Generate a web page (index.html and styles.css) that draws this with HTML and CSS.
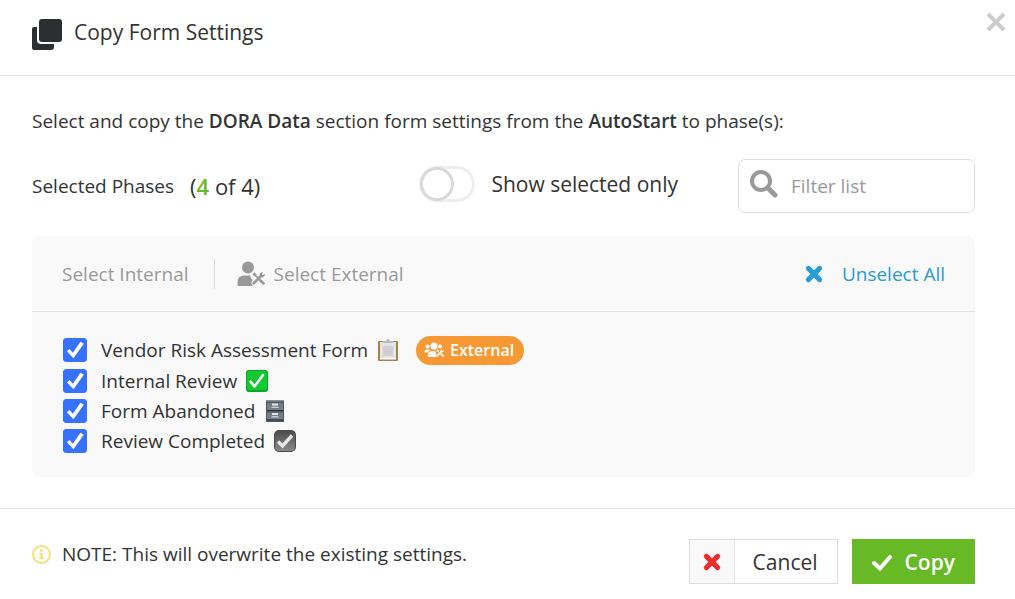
FILE: index.html
```html
<!DOCTYPE html>
<html lang="en">
<head>
    <meta charset="UTF-8">
    <meta name="viewport" content="width=device-width, initial-scale=1.0">
    <title>Copy Form Settings</title>
    <link rel="stylesheet" href="styles.css">
</head>
<body>
    <!-- shared icons -->
    <svg class="sprite" aria-hidden="true">
        <symbol id="icon-times" viewBox="0 0 16 16">
            <path d="M3.500 3.500l9 9M12.500 3.500l-9 9" fill="none" stroke="currentColor" stroke-width="4" stroke-linecap="round" />
        </symbol>
        <symbol id="icon-tools" viewBox="0 0 12 12">
            <path d="M3.500 3.500l5 5" stroke="currentColor" stroke-width="1.500" />
            <path d="M1.200 1.300l2.400 2.200" stroke="currentColor" stroke-width="2.600" />
            <path d="M8 8l2.500 2.500M1.600 10.400L8.500 3.500" stroke="currentColor" stroke-width="2.600" stroke-linecap="round" />
            <path d="M7 3.400A2.600 2.600 0 0 1 10.300.4L8.900 1.900l.2 1 1 .2L11.600 1.700A2.600 2.600 0 0 1 8.600 5z" fill="currentColor" />
        </symbol>
    </svg>

    <form class="modal">
        <header class="modal-header">
            <svg class="icon-copy" width="30" height="31" viewBox="0 0 30 31" aria-hidden="true">
                <rect x="7" y="0" width="23" height="23" rx="3" fill="#2d2e2f" />
                <path d="M5 8H2a2 2 0 0 0-2 2v19a2 2 0 0 0 2 2h17a3 3 0 0 0 3-3v-3H9a4 4 0 0 1-4-4z" fill="#2d2e2f" />
            </svg>
            <h1>Copy Form Settings</h1>
            <button type="button" class="close" aria-label="Close">
                <svg width="20" height="20" viewBox="0 0 20 20"><path d="M2 2l16 16M18 2L2 18" stroke="currentColor" stroke-width="4" /></svg>
            </button>
        </header>

        <main class="modal-body">
            <p class="intro">Select and copy the <strong>DORA Data</strong> section form settings from the <strong>AutoStart</strong> to phase(s):</p>

            <div class="toolbar">
                <div class="selected">Selected Phases <span class="count">(<b>4</b> of 4)</span></div>
                <label class="switch"><input type="checkbox" id="selectedOnly"> Show selected only</label>
                <div class="filter">
                    <svg width="28" height="28" viewBox="0 0 28 28" aria-hidden="true">
                        <circle cx="11" cy="11" r="9" fill="none" stroke="#999" stroke-width="4" />
                        <path d="M18 18l7 7" stroke="#999" stroke-width="5" stroke-linecap="round" />
                    </svg>
                    <input type="text" id="filter" placeholder="Filter list" aria-label="Filter list">
                </div>
            </div>

            <section class="panel">
                <div class="panel-actions">
                    <button type="button">Select Internal</button>
                    <span class="divider"></span>
                    <button type="button">
                        <svg width="28" height="26" viewBox="0 0 28 26" aria-hidden="true">
                            <circle cx="11" cy="6.500" r="6" fill="currentColor" />
                            <path d="M7 14.500h6.500c0 2 .5 3 2.200 4.500-1.700 2-1.700 4 .3 6H2q-1.500 0-1.500-1.500v-2q0-7 6.500-7z" fill="currentColor" />
                            <use href="#icon-tools" x="15" y="11" width="13" height="13" />
                        </svg>
                        Select External
                    </button>
                    <button type="button" class="unselect">
                        <svg width="20" height="20" aria-hidden="true"><use href="#icon-times" /></svg>
                        Unselect All
                    </button>
                </div>

                <ul class="phases">
                    <li>
                        <input type="checkbox" id="phase1" checked>
                        <label for="phase1">Vendor Risk Assessment Form
                            <svg width="22" height="24" viewBox="0 0 22 24" role="img" aria-label="Clipboard">
                                <rect x="1" y="3" width="20" height="20" rx="1" fill="#a8824c" />
                                <rect x="3" y="4" width="16" height="17" fill="#e4e4e4" />
                                <path d="M6 8h10v10H6z" fill="#cfcfd0" />
                                <path d="M3 20h16v1.500H3z" fill="#fff" />
                                <path d="M6 5V3h3a2 2 0 0 1 4 0h3v2z" fill="#b9c0c4" />
                            </svg>
                        </label>
                        <span class="badge">
                            <svg width="20" height="16" viewBox="0 0 20 16" aria-hidden="true">
                                <circle cx="3.500" cy="4.500" r="2" fill="#fff" />
                                <circle cx="10" cy="4" r="3.500" fill="#fff" />
                                <circle cx="16" cy="4.500" r="2" fill="#fff" />
                                <path d="M.5 10.500V9.500q0-2 2-2h2q1 0 1.500.5-1.500 1-2 2.500zM4.500 15q-.8 0-.8-1 0-5 5-5h2.500q0 1.500 1.300 2.700-1.500 1.800-.3 3.300z" fill="#fff" />
                                <use href="#icon-tools" x="12" y="7" width="8" height="8" />
                            </svg>
                            External
                        </span>
                    </li>
                    <li>
                        <input type="checkbox" id="phase2" checked>
                        <label for="phase2">Internal Review
                            <svg width="22" height="22" viewBox="0 0 22 22" role="img" aria-label="Done">
                                <rect width="22" height="22" rx="3" fill="#0aa52c" />
                                <rect x="1" y="1" width="20" height="19" rx="2" fill="#13c832" />
                                <path d="M4.500 11.500l4 5L17 5" fill="none" stroke="#fff" stroke-width="2.500" stroke-linecap="round" stroke-linejoin="round" />
                            </svg>
                        </label>
                    </li>
                    <li>
                        <input type="checkbox" id="phase3" checked>
                        <label for="phase3">Form Abandoned
                            <svg width="22" height="22" viewBox="0 0 22 22" role="img" aria-label="File cabinet">
                                <path d="M2 0h18v22H2z" fill="#505961" />
                                <path d="M2 0h18v1.500H2z" fill="#899198" />
                                <path d="M3 3h16v7H3zM3 12.500h16v7H3z" fill="#737d85" />
                                <path d="M3 10h16v1H3zM3 19.500h16v1H3z" fill="#30383e" />
                                <path d="M8 3.500h6v2H8zM8 13h6v2H8z" fill="#e3e6e8" />
                                <path d="M7 8q0-1.500 2-1.500h4q2 0 2 1.500zM7 17.500q0-1.500 2-1.500h4q2 0 2 1.500z" fill="#c6cbd0" />
                            </svg>
                        </label>
                    </li>
                    <li>
                        <input type="checkbox" id="phase4" checked>
                        <label for="phase4">Review Completed
                            <svg width="22" height="22" viewBox="0 0 22 22" role="img" aria-label="Completed">
                                <defs>
                                    <linearGradient id="grey" x1="0" y1="0" x2="0" y2="1">
                                        <stop offset="0" stop-color="#4c4c4c" />
                                        <stop offset="1" stop-color="#898989" />
                                    </linearGradient>
                                </defs>
                                <rect width="22" height="22" rx="5" fill="#4b4b4b" />
                                <rect x="1" y="1" width="20" height="20" rx="4" fill="url(#grey)" />
                                <path d="M4 11.500l4.500 4.500L18 5.500" fill="none" stroke="#e6e6e6" stroke-width="3.500" />
                            </svg>
                        </label>
                    </li>
                </ul>
            </section>
        </main>

        <footer class="modal-footer">
            <p class="note">
                <svg width="19" height="19" viewBox="0 0 19 19" aria-hidden="true">
                    <circle cx="9.500" cy="9.500" r="8.500" fill="none" stroke="#f5df78" stroke-width="1.800" />
                    <circle cx="9.500" cy="5.500" r="1.500" fill="#f5df78" />
                    <path d="M7.300 8h3.400v4.300h1.100V14H7.300v-1.700h1.100V9.700H7.300z" fill="#f5df78" />
                </svg>
                NOTE: This will overwrite the existing settings.
            </p>
            <button type="button" class="btn btn-cancel">
                <span class="btn-icon"><svg width="20" height="20" aria-hidden="true"><use href="#icon-times" /></svg></span>
                <span class="btn-text">Cancel</span>
            </button>
            <button type="submit" class="btn btn-copy">
                <svg width="22" height="18" viewBox="0 0 22 18" aria-hidden="true"><path d="M3 10l6 5.500L19 4" fill="none" stroke="#fff" stroke-width="4" stroke-linecap="round" /></svg>
                Copy
            </button>
        </footer>
    </form>
</body>
</html>
```
FILE: styles.css
```css
* {
    box-sizing: border-box;
}
body {
    margin: 0;
    background: #fff;
    color: #333;
    font-family: "Open Sans", sans-serif;
    font-size: 19px;
    line-height: 30px;
}
h1, p, ul {
    margin: 0;
    padding: 0;
}
button, input {
    font: inherit;
    color: inherit;
    margin: 0;
}
button {
    border: none;
    background: none;
    padding: 0;
    cursor: pointer;
}
svg {
    display: block;
    flex: none;
}
strong {
    font-weight: 600;
}
.sprite {
    position: absolute;
    width: 0;
    height: 0;
}

/* Header */
.modal-header {
    display: flex;
    align-items: flex-start;
    gap: 12px;
    height: 76px;
    padding: 12px 9px 0 32px;
    border-bottom: 1px solid #e2e2e2;
}
.icon-copy {
    margin-top: 7px;
}
h1 {
    flex: 1;
    font-size: 21px;
    font-weight: 400;
    line-height: 40px;
}
.close {
    color: #ccc;
}

/* Body */
.modal-body {
    padding: 30px 40px 31px 32px;
}
.toolbar {
    display: flex;
    align-items: center;
    margin: 23px 0;
}
.selected {
    display: flex;
    flex: 1;
    gap: 16px;
}
.count {
    font-size: 22px;
}
.count b {
    color: #67b926;
    font-weight: 600;
}
.switch {
    display: flex;
    align-items: center;
    gap: 16px;
    margin: 0 60px 4px 0;
    font-size: 21px;
}
.switch input {
    appearance: none;
    display: flex;
    align-items: center;
    width: 56px;
    height: 36px;
    border: 3px solid #eee;
    border-radius: 18px;
}
.switch input::before {
    content: "";
    flex: none;
    width: 28px;
    height: 28px;
    margin-left: -2px;
    border: 3px solid #d9d9d9;
    border-radius: 50%;
    background: #fff;
}
.switch input:checked::before {
    margin-left: 18px;
    border-color: #67b926;
}
.filter {
    display: flex;
    align-items: center;
    gap: 13px;
    width: 237px;
    height: 54px;
    padding: 0 12px 4px 11px;
    border: 1px solid #ddd;
    border-radius: 7px;
}
.filter input {
    width: 100%;
    padding: 4px 0 0;
    border: none;
    outline: none;
}
.filter input::placeholder {
    color: #999;
}

/* Phases */
.panel {
    background: #f9f9f9;
    border-radius: 7px;
}
.panel-actions {
    display: flex;
    align-items: center;
    height: 76px;
    padding: 0 30px;
    border-bottom: 1px solid #e2e2e2;
    color: #999;
}
.panel-actions button {
    display: flex;
    align-items: center;
    gap: 9px;
}
.divider {
    width: 1px;
    height: 30px;
    margin: 0 22px 0 25px;
    background: #ddd;
}
.panel-actions .unselect {
    gap: 18px;
    margin-left: auto;
    color: #2a9bd4;
}
.phases {
    padding: 23px 31px 21px;
    list-style: none;
}
.phases li {
    display: flex;
    align-items: center;
    height: 30px;
}
.phases li:first-child {
    margin-bottom: 1px;
}
.phases input {
    appearance: none;
    width: 24px;
    height: 24px;
    margin-right: 14px;
    border: 1px solid #999;
    border-radius: 3px;
    background: #fff;
}
.phases input:checked {
    border-color: #3772ff;
    background: #3772ff;
}
.phases input:checked::before {
    content: "";
    display: block;
    height: 22px;
    background: #fff;
    clip-path: polygon(13% 56%, 25% 46%, 40% 62%, 75% 12%, 90% 22%, 43% 88%);
}
.phases label {
    display: flex;
    align-items: center;
    gap: 9px;
}
.badge {
    display: flex;
    align-items: center;
    gap: 6px;
    height: 29px;
    margin-left: 17px;
    padding: 0 10px 0 8px;
    border-radius: 15px;
    background: #f69833;
    color: #fff;
    font-size: 16px;
    font-weight: 600;
}

/* Footer */
.modal-footer {
    display: flex;
    align-items: flex-start;
    gap: 14px;
    padding: 30px 40px 15px 32px;
    border-top: 1px solid #e2e2e2;
}
.note {
    display: flex;
    flex: 1;
    align-items: center;
    gap: 11px;
}
.btn {
    display: flex;
    align-items: center;
    height: 45px;
    font-size: 21px;
}
.btn-cancel {
    align-items: stretch;
    border: 1px solid #ddd;
}
.btn-icon {
    display: flex;
    align-items: center;
    padding: 0 12px;
    border-right: 1px solid #e5e5e5;
    background: #f9f9f9;
    color: #ed2d2d;
}
.btn-text {
    padding: 0 19px 0 18px;
    line-height: 44px;
}
.btn-copy {
    gap: 12px;
    padding: 0 20px 0 19px;
    background: #67b926;
    color: #fff;
    font-weight: 600;
}
```
